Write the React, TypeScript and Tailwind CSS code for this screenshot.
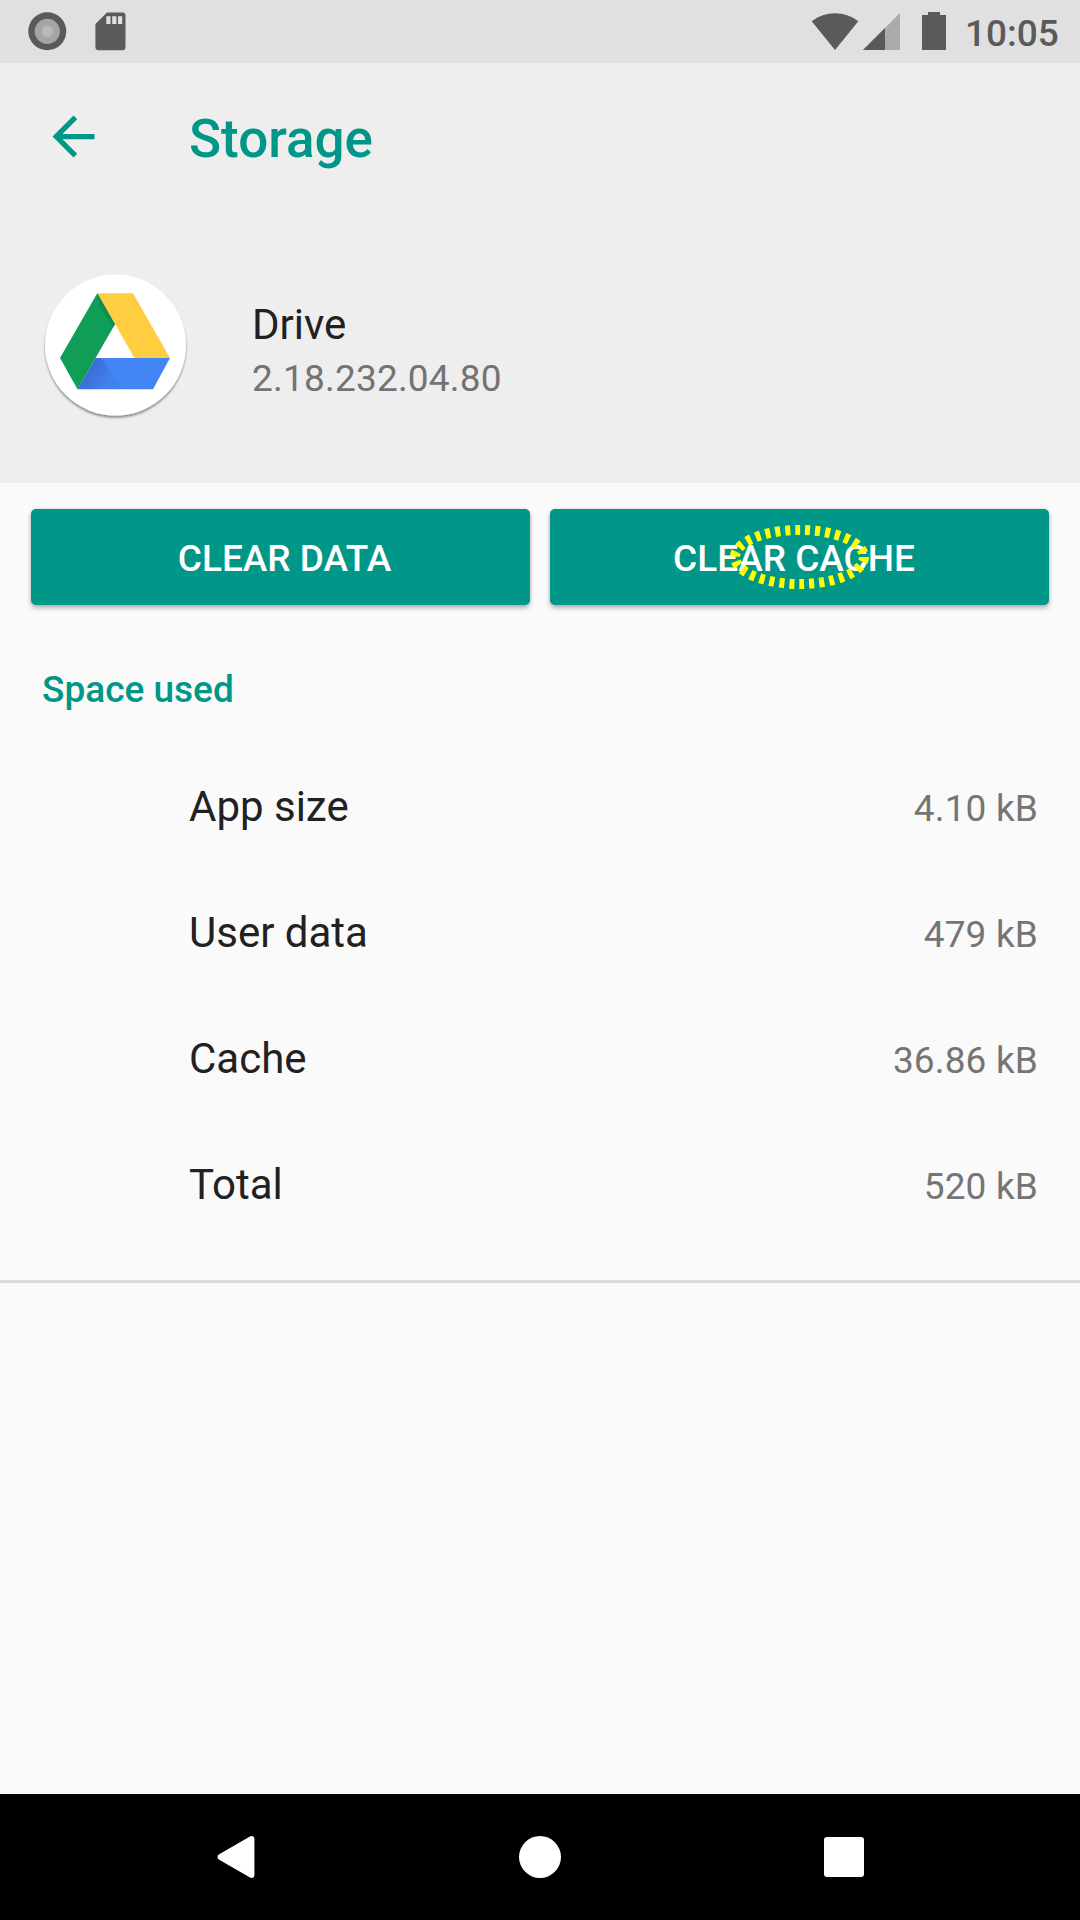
import React from 'react';

const rows = [
  { label: 'App size', value: '4.10 kB' },
  { label: 'User data', value: '479 kB' },
  { label: 'Cache', value: '36.86 kB' },
  { label: 'Total', value: '520 kB' },
];

function StatusBar() {
  return (
    <header className="flex h-[63px] items-start bg-[#e0e0e0]">
      <svg className="h-[63px] w-[200px]" viewBox="0 0 200 63">
        <circle cx="47.3" cy="31.3" r="19" fill="#5a5a5a" />
        <circle cx="47.3" cy="31.3" r="12.6" fill="#a4a4a4" />
        <circle cx="47.3" cy="31.3" r="5.8" fill="#b8b8b8" />
        <path d="M107 12.5h15.500a3 3 0 0 1 3 3v31.500a3.300 3.300 0 0 1-3.300 3.300H98.700a3.300 3.300 0 0 1-3.300-3.300V24z" fill="#5a5a5a" />
        <path d="M106.300 16.300h4.200V24h-4.200zM112.200 16.300h4.200V24h-4.200zM118 16.300h4.200V24H118z" fill="#e0e0e0" />
      </svg>
      <svg className="ml-auto h-[63px] w-[150px]" viewBox="810 0 150 63">
        <path d="M811.700 21.300C825 10.500 845 10.500 858.300 21.300L835 50z" fill="#5a5a5a" />
        <path d="M900 13v37h-37z" fill="#aaaaaa" />
        <path d="M885 28v22h-22z" fill="#5a5a5a" />
        <path d="M922 15h6v-3h12v3h6v35h-24z" fill="#5a5a5a" />
      </svg>
      <span className="w-[120px] whitespace-nowrap pl-[5px] pt-px text-[37px] font-medium leading-[66px] text-[#5a5a5a]">10:05</span>
    </header>
  );
}

function DriveIcon() {
  return (
    <svg className="h-[150px] w-[150px]" viewBox="0 0 150 150">
      <defs>
        <filter id="disc-shadow" x="-10%" y="-10%" width="120%" height="120%">
          <feDropShadow dx="0" dy="2.2" stdDeviation="1.3" floodColor="#000" floodOpacity="0.42" />
        </filter>
        <linearGradient id="green-fold" gradientUnits="userSpaceOnUse" x1="68" y1="42" x2="60" y2="46.500">
          <stop offset="0" stopColor="#0b7a46" stopOpacity="0.7" />
          <stop offset="1" stopColor="#0f9d58" stopOpacity="0" />
        </linearGradient>
        <linearGradient id="blue-fold" gradientUnits="userSpaceOnUse" x1="45" y1="98" x2="68" y2="112">
          <stop offset="0" stopColor="#3a62c8" stopOpacity="0.8" />
          <stop offset="1" stopColor="#3a62c8" stopOpacity="0.15" />
        </linearGradient>
      </defs>
      <circle cx="75.500" cy="75" r="70.500" fill="#fff" filter="url(#disc-shadow)" />
      <path d="M57.300 23.300H93L130 88H94.500z" fill="#ffcd40" />
      <path d="M55.500 88H130l-17 31.300H37.500z" fill="#4285f4" />
      <path d="M56 88l2-4 25.500 35.300h-46z" fill="url(#blue-fold)" clipPath="inset(4px 0 0 0)" />
      <path d="M57.300 23.300L75 54.300 37.500 119.300 20 88z" fill="#0f9d58" />
      <path d="M57.300 23.300L75 54.300l-2 3.500-14-21z" fill="url(#green-fold)" />
    </svg>
  );
}

function ActionButton({ label, marked }: { label: string; marked?: boolean }) {
  return (
    <button
      className={`relative h-24 w-[499px] rounded-[5px] bg-[#009688] pt-[4px] text-[37px] font-medium leading-[92px] text-white shadow-[0_3px_5px_rgba(0,0,0,0.28),0_0_3px_rgba(0,0,0,0.12)] ${marked ? 'pr-[11px]' : 'pl-[8px]'}`}
    >
      {label}
      {marked && (
        <svg className="absolute left-[179px] top-[15px] h-[66px] w-[142px]" viewBox="0 0 142 66">
          <ellipse cx="70.500" cy="33" rx="64.500" ry="27" fill="none" stroke="#ffff00" strokeWidth="10" strokeDasharray="5 5" />
        </svg>
      )}
    </button>
  );
}

export default function App() {
  return (
    <div className="flex h-[1920px] w-[1080px] flex-col overflow-hidden bg-[#fafafa] font-[Roboto,sans-serif]">
      <StatusBar />
      <section className="h-[420px] bg-[#eeeeee]">
        <div className="flex h-[147px] items-center">
          <svg className="ml-[42px] h-[63px] w-[63px]" viewBox="0 0 24 24" fill="#009688">
            <path d="M20 11H7.830l5.590-5.590L12 4l-8 8 8 8 1.410-1.410L7.830 13H20v-2z" />
          </svg>
          <h1 className="ml-[84px] pt-[5px] text-[53px] font-medium leading-[62px] text-[#009688]">Storage</h1>
        </div>
        <div className="flex pl-[40px] pt-[60px]">
          <DriveIcon />
          <div className="pl-[62px] pt-[30px]">
            <div className="text-[42px] leading-[50px] text-[#212121]">Drive</div>
            <div className="pt-[6px] text-[37px] leading-[46px] tracking-[0.2px] text-[#737373]">2.18.232.04.80</div>
          </div>
        </div>
      </section>
      <div className="flex gap-5 pl-[31px] pt-[26px]">
        <ActionButton label="CLEAR DATA" />
        <ActionButton label="CLEAR CACHE" marked />
      </div>
      <h2 className="pl-[42px] pt-[61px] text-[37px] font-medium leading-[48px] text-[#009688]">Space used</h2>
      <main className="mt-[30px] h-[539px] border-b-[3px] border-[#dcdcdc]">
        {rows.map((r) => (
          <div key={r.label} className="flex h-[126px] items-center justify-between pl-[189px] pr-[42px]">
            <span className="text-[42px] leading-[50px] text-[#212121]">{r.label}</span>
            <span className="pt-[3px] text-[37px] leading-[46px] tracking-[0.15px] text-[#757575]">{r.value}</span>
          </div>
        ))}
      </main>
      <nav className="mt-auto h-[126px] bg-black">
        <svg className="h-[126px] w-[1080px]" viewBox="0 0 1080 126" fill="#fff">
          <path d="M218.800 60.500L249.500 42.700c2.500-1.500 4.900-.5 4.900 2.300v36c0 2.800-2.400 3.800-4.900 2.300L218.800 65.500c-1.700-1.200-1.700-3.800 0-5z" />
          <circle cx="540" cy="63" r="21" />
          <rect x="824" y="43" width="40" height="40" rx="3" />
        </svg>
      </nav>
    </div>
  );
}
